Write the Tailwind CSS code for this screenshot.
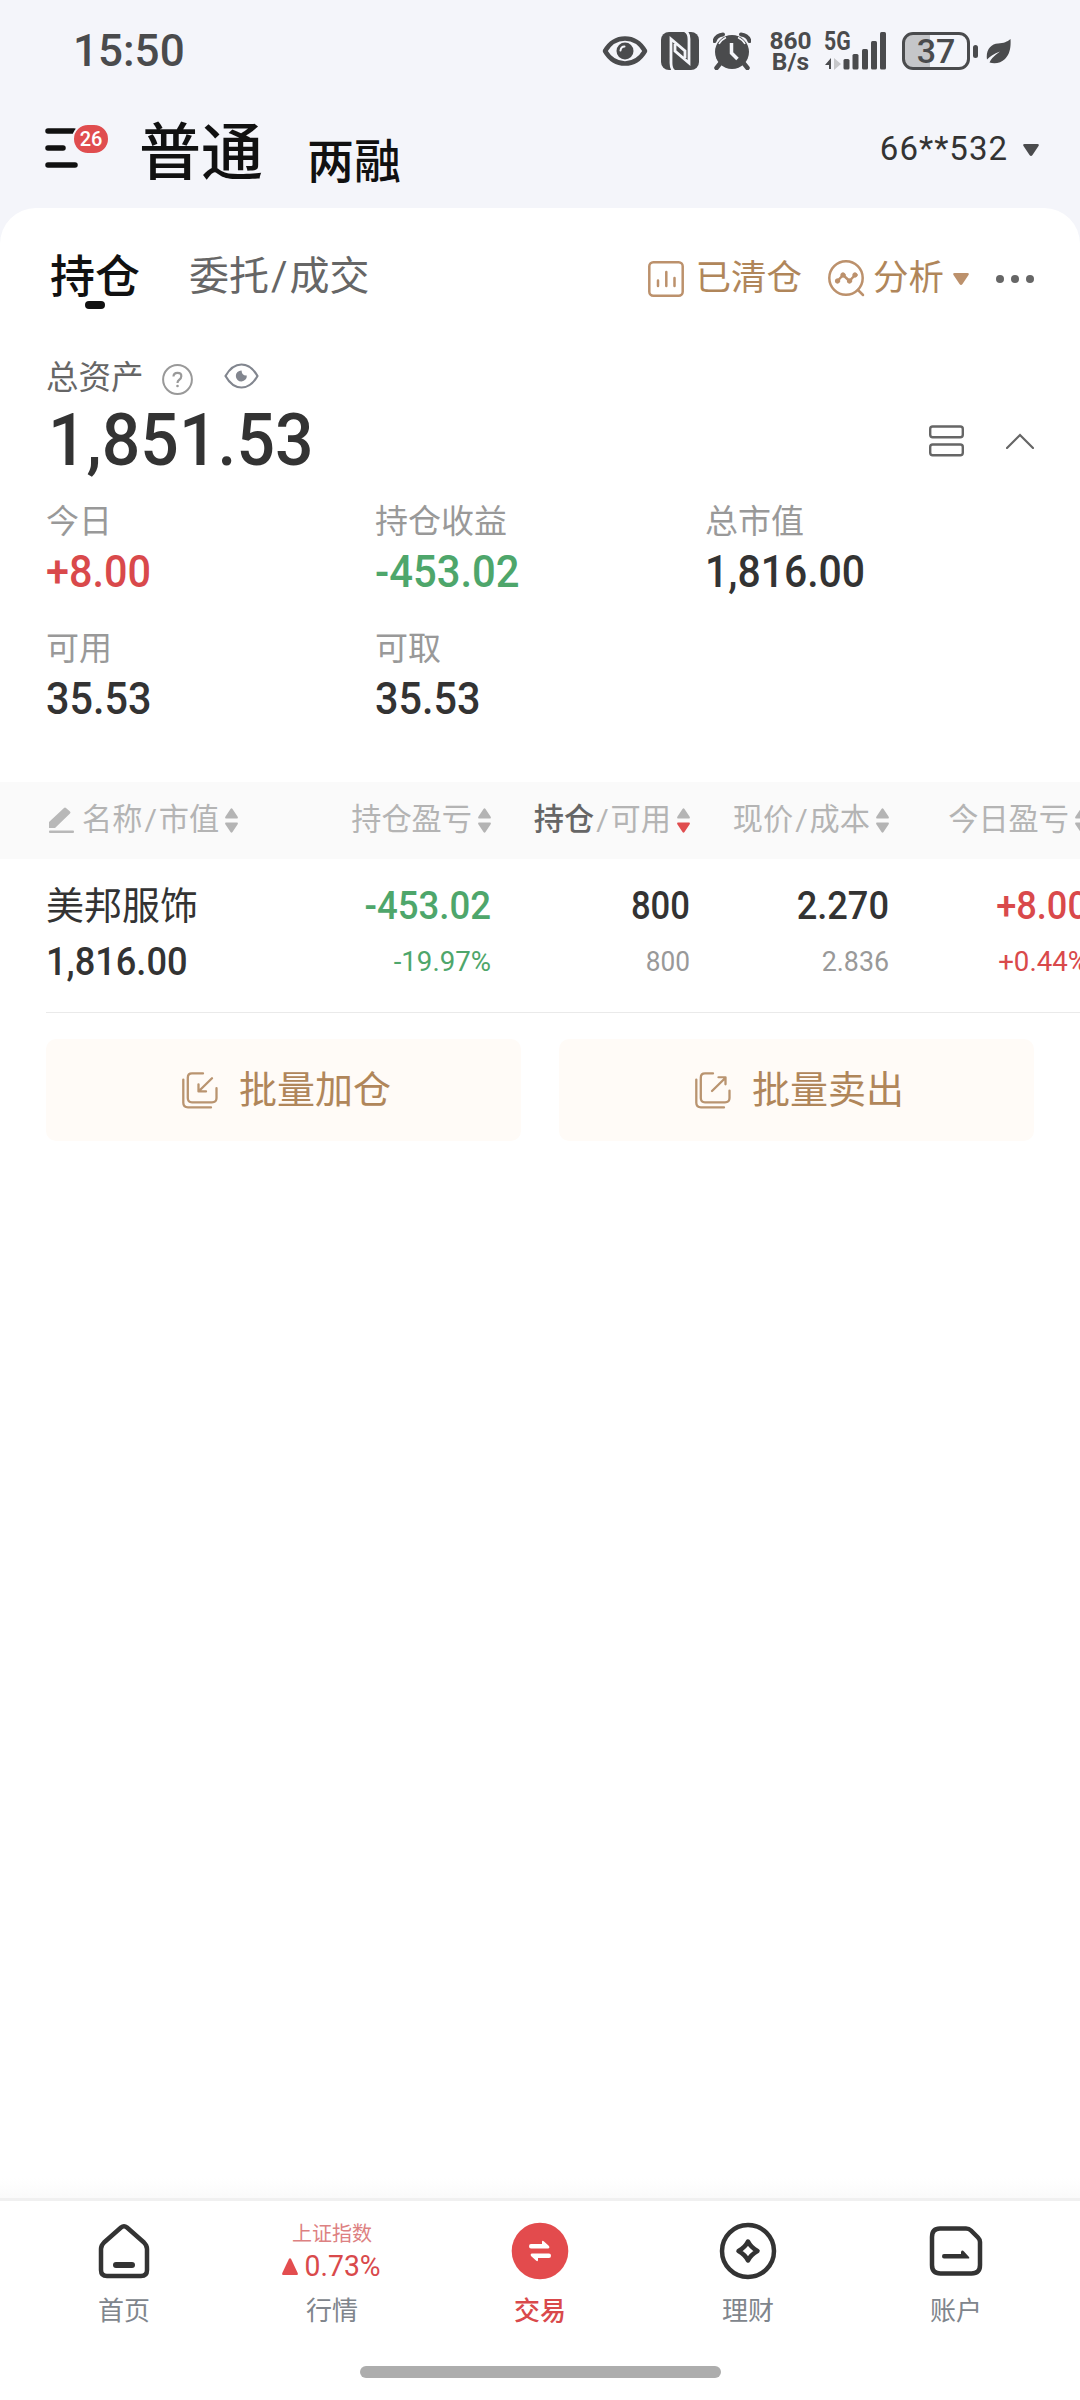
<!DOCTYPE html>
<html lang="zh-CN">
<head>
    <meta charset="UTF-8" />
    <title>持仓</title>
    <script src="https://cdn.jsdelivr.net/npm/@tailwindcss/browser@4"></script>
</head>
<body class="bg-[#f4f5fa] font-['Roboto','Noto_Sans_CJK_SC',sans-serif]">
<div class="w-[1080px] h-[2400px] flex flex-col overflow-hidden leading-none text-[#333]">

    <!-- Status bar -->
    <div class="h-[102px] pl-[73px] pr-[69px] flex items-center justify-between text-[#4a4b4d]">
        <span class="text-[44px] font-medium">15:50</span>
        <div class="flex items-center">
            <svg class="w-[46px] h-[32px] mr-[13px]" viewBox="0 0 46 32" fill="none">
                <path d="M3 16C8 7.500 15 3.500 23 3.500S38 7.500 43 16C38 24.500 31 28.500 23 28.500S8 24.500 3 16Z" stroke="#4a4b4d" stroke-width="4.500" stroke-linejoin="round"/>
                <circle cx="23" cy="16" r="8.500" fill="#4a4b4d"/>
                <path d="M18.500 15.500Q19 11.500 22.500 11.500" stroke="#f4f5fa" stroke-width="2" stroke-linecap="round"/>
            </svg>
            <svg class="w-[38px] h-[38px] mr-[14px]" viewBox="0 0 38 38">
                <rect width="38" height="38" rx="8" fill="#4a4b4d"/>
                <path d="M13 39Q10 37 10 31V7L24 19V26M24 -1Q28 1 28 7V31L14 19V12" fill="none" stroke="#f4f5fa" stroke-width="2.800"/>
            </svg>
            <svg class="w-[38px] h-[38px] mr-[17px]" viewBox="0 0 38 38" fill="none" stroke="#4a4b4d">
                <circle cx="19" cy="20" r="17" fill="#4a4b4d" stroke="none"/>
                <path d="M1.500 9Q3.500 3 10 2.500M36.500 9Q34.500 3 28 2.500" stroke-width="4" stroke-linecap="round"/>
                <path d="M7.500 31L3.500 36M30.500 31L34.500 36" stroke-width="4.500" stroke-linecap="round"/>
                <path d="M6 12Q8 8 13 5.500M32 12Q30 8 25 5.500" stroke="#f4f5fa" stroke-width="1.500"/>
                <path d="M18.500 11V21L24.500 27" stroke="#f4f5fa" stroke-width="3.500"/>
            </svg>
            <div class="w-[45px] mr-[11px] flex flex-col items-center text-[24.500px] leading-[21px] font-bold">
                <span>860</span>
                <span>B/s</span>
            </div>
            <div class="relative w-[63px] h-[38px] mr-[15px]">
                <span class="absolute left-0 -top-[3px] text-[25px] font-bold scale-x-85 origin-left">5G</span>
                <svg class="w-[63px] h-[38px]" viewBox="0 0 63 38" fill="#4a4b4d">
                    <path d="M1 33L7 26V37H5V33Z"/>
                    <path d="M10 26L17 32L10 38Z" fill="#c6c7ca"/>
                    <rect x="19.500" y="27" width="6" height="10.500" rx="1.500"/>
                    <rect x="28.500" y="22" width="6" height="15.500" rx="1.500"/>
                    <rect x="38" y="17" width="6" height="20.500" rx="1.500"/>
                    <rect x="47" y="9" width="6" height="28.500" rx="1.500"/>
                    <rect x="56" y="0" width="6" height="37.500" rx="1.500"/>
                </svg>
            </div>
            <div class="w-[68px] h-[38px] rounded-[11px] border-[3px] border-[#4a4b4d] bg-linear-to-r from-[#c5c6c9] from-40% to-transparent to-40% flex items-center justify-center text-[34px] font-medium">37</div>
            <div class="w-[5px] h-[13px] ml-[3px] mr-[8px] rounded-full bg-[#4a4b4d]"></div>
            <svg class="w-[25px] h-[26px]" viewBox="0 0 25 26">
                <path d="M24.500 1C25 9 24 16 19 21C15 25 9 26 3.500 24.500Q5 20 14 13.500Q5 17 1 21.500C-.500 12 5 6 12 5.500C18 5 21 4 24.500 1Z" fill="#4a4b4d"/>
            </svg>
        </div>
    </div>

    <!-- Account header -->
    <div class="h-[106px] pl-[45px] pr-[41px] flex items-start">
        <div class="relative w-[64px] h-[46px] mt-[23px]">
            <svg class="w-[34px] h-[46px]" viewBox="0 0 34 46" stroke="#111" stroke-width="5.500" stroke-linecap="round">
                <path d="M3 6H29M3 23H18M3 40H30"/>
            </svg>
            <span class="absolute left-[27px] -top-[2px] w-[38px] h-[32px] rounded-full border-2 border-[#f4f5fa] bg-[#e04d4f] text-white text-[20px] font-medium flex items-center justify-center">26</span>
        </div>
        <span class="ml-[30px] mt-[21px] text-[62px] font-medium text-[#111]">普通</span>
        <span class="ml-[44px] mt-[36px] text-[47px] font-medium text-[#111]">两融</span>
        <div class="ml-auto mt-[30px] flex items-center gap-[15px]">
            <span class="text-[33px] tracking-[1px]">66**532</span>
            <svg class="w-[16px] h-[12px] mt-[3px]" viewBox="0 0 16 12"><path d="M1.500 0H14.500Q16.500 0 15.500 2L9.500 11Q8 13 6.500 11L.500 2Q-.500 0 1.500 0Z" fill="#4a4b4d"/></svg>
        </div>
    </div>

    <main class="flex-1 flex flex-col bg-white rounded-t-[36px]">

        <!-- Tabs -->
        <div class="h-[124px] pl-[50px] pr-[46px] pt-[47px] flex items-start">
            <div class="relative text-[45px] font-medium text-[#111]">
                持仓
                <span class="absolute left-[35px] top-[46px] w-[20px] h-[8px] rounded-full bg-[#111]"></span>
            </div>
            <span class="ml-[49px] mt-[2px] text-[40px] text-[#666]">委托<span class="mx-[2px]">/</span>成交</span>
            <div class="ml-auto mt-[5px] flex items-center text-[35.500px] text-[#b0865a]">
                <svg class="w-[36px] h-[36px] mr-[11px]" viewBox="0 0 36 36" fill="none" stroke="#bc916c" stroke-width="2.500" stroke-linecap="round">
                    <rect x="1.300" y="1.300" width="33.400" height="33.400" rx="4"/>
                    <path d="M10 19.500V25M18.300 11V25M26.500 17V25"/>
                </svg>
                <span>已清仓</span>
                <svg class="w-[37px] h-[37px] ml-[26px] mr-[8px]" viewBox="0 0 37 37" fill="none" stroke="#bc916c" stroke-width="2.500" stroke-linecap="round">
                    <circle cx="18" cy="18" r="16.700"/>
                    <path d="M30 30L35 35M9.500 21L15 15L21.500 21L27 15" stroke-linejoin="round"/>
                    <g fill="#bc916c" stroke-width="1"><circle cx="9.500" cy="21" r="2.200"/><circle cx="15" cy="15" r="2.200"/><circle cx="21.500" cy="21" r="2.200"/><circle cx="27" cy="15" r="2.200"/></g>
                </svg>
                <span>分析</span>
                <svg class="w-[16px] h-[12px] ml-[9px] mr-[27px]" viewBox="0 0 16 12"><path d="M1.500 0H14.500Q16.500 0 15.500 2L9.500 11Q8 13 6.500 11L.500 2Q-.500 0 1.500 0Z" fill="#bc916c"/></svg>
                <svg class="w-[38px] h-[8px]" viewBox="0 0 38 8" fill="#666"><circle cx="4" cy="4" r="4"/><circle cx="19" cy="4" r="4"/><circle cx="34" cy="4" r="4"/></svg>
            </div>
        </div>

        <!-- Total assets -->
        <div class="px-[46px]">
            <div class="h-[70px] pt-[30px] flex items-start">
                <span class="text-[32.500px] text-[#666]">总资产</span>
                <svg class="w-[31px] h-[31px] mt-[2px] ml-[18px]" viewBox="0 0 31 31" fill="none" stroke="#999">
                    <circle cx="15.500" cy="15.500" r="14.400" stroke-width="2"/>
                    <path d="M11.500 12.500Q11.500 8.800 15.500 8.800T19.300 12.300Q19.300 14.500 17 16Q15.500 17 15.500 19" stroke-width="2.200"/>
                    <circle cx="15.500" cy="22" r="1.300" fill="#999" stroke="none"/>
                </svg>
                <svg class="w-[35px] h-[26px] mt-[1px] ml-[31px]" viewBox="0 0 35 26" fill="none">
                    <path d="M1.500 13Q8 1.500 17.500 1.500T33.500 13Q27 24.500 17.500 24.500T1.500 13Z" stroke="#82868f" stroke-width="2.200" stroke-linejoin="round"/>
                    <path d="M17.500 7.500A5.500 5.500 0 1 0 22.800 12.500Q18 13 17.500 7.500Z" fill="#82868f"/>
                </svg>
            </div>
            <div class="h-[94px] flex items-start justify-between">
                <span class="mt-[2px] ml-[2px] text-[73px] font-medium scale-x-93 origin-left">1,851.53</span>
                <div class="mt-[23px] flex items-center gap-[42px]">
                    <svg class="w-[35px] h-[32px]" viewBox="0 0 35 32" fill="none" stroke="#666" stroke-width="2.400"><rect x="1.200" y="1.500" width="32.600" height="10.800" rx="2.500"/><rect x="1.200" y="19.500" width="32.600" height="10.800" rx="2.500"/></svg>
                    <svg class="w-[28px] h-[16px]" viewBox="0 0 28 16" fill="none" stroke="#666" stroke-width="2.200" stroke-linecap="round"><path d="M1 15L14 2L27 15"/></svg>
                </div>
            </div>
            <div class="grid grid-cols-[329px_330px_1fr] gap-y-[38px] mt-[9px]">
                <div>
                    <p class="text-[33px] text-[#999]">今日</p>
                    <p class="mt-[12px] text-[44px] font-medium text-[#d9494b] scale-x-94 origin-left">+8.00</p>
                </div>
                <div>
                    <p class="text-[33px] text-[#999]">持仓收益</p>
                    <p class="mt-[12px] text-[44px] font-medium text-[#4ea66b] scale-x-95 origin-left">-453.02</p>
                </div>
                <div>
                    <p class="text-[33px] text-[#999]">总市值</p>
                    <p class="mt-[12px] text-[44px] font-medium scale-x-93 origin-left">1,816.00</p>
                </div>
                <div>
                    <p class="text-[33px] text-[#999]">可用</p>
                    <p class="mt-[12px] text-[44px] font-medium scale-x-94 origin-left">35.53</p>
                </div>
                <div>
                    <p class="text-[33px] text-[#999]">可取</p>
                    <p class="mt-[12px] text-[44px] font-medium scale-x-94 origin-left">35.53</p>
                </div>
            </div>
        </div>

        <!-- Positions table -->
        <div class="mt-[61px] h-[77px] pl-[46px] bg-[#fafafa] grid grid-cols-[246px_199px_199px_199px_199px] items-center text-[30.200px] text-[#b4b4b4]">
            <div class="flex items-center whitespace-nowrap">
                <svg class="w-[25px] h-[26px] ml-[3px] mr-[8px]" viewBox="0 0 25 26" fill="#b8b8b8"><path d="M0 21V15L15 1Q16 0 17 1L21 4.500Q22 5.500 21 6.500L6 21Z"/><rect y="23.500" width="25" height="2.500" rx="1"/></svg>
                <span>名称<span class="mx-[2px]">/</span>市值</span>
                <svg class="w-[13px] h-[25px] ml-[6px]" viewBox="0 0 13 25" fill="#b4b4b4"><path d="M5.500 1Q6.500 -.500 7.500 1L12.500 8.500Q13.500 10.500 12 10.500H1Q-.500 10.500 .500 8.500Z"/><path d="M5.500 24Q6.500 25.500 7.500 24L12.500 16.500Q13.500 14.500 12 14.500H1Q-.500 14.500 .500 16.500Z"/></svg>
            </div>
            <div class="flex items-center justify-end whitespace-nowrap">
                <span>持仓盈亏</span>
                <svg class="w-[13px] h-[25px] ml-[6px]" viewBox="0 0 13 25" fill="#b4b4b4"><path d="M5.500 1Q6.500 -.500 7.500 1L12.500 8.500Q13.500 10.500 12 10.500H1Q-.500 10.500 .500 8.500Z"/><path d="M5.500 24Q6.500 25.500 7.500 24L12.500 16.500Q13.500 14.500 12 14.500H1Q-.500 14.500 .500 16.500Z"/></svg>
            </div>
            <div class="flex items-center justify-end whitespace-nowrap">
                <span><span class="font-medium text-[#666]">持仓</span><span class="mx-[2px]">/</span>可用</span>
                <svg class="w-[13px] h-[25px] ml-[6px]" viewBox="0 0 13 25" fill="#b4b4b4"><path d="M5.500 1Q6.500 -.500 7.500 1L12.500 8.500Q13.500 10.500 12 10.500H1Q-.500 10.500 .500 8.500Z"/><path fill="#e04d4f" d="M5.500 24Q6.500 25.500 7.500 24L12.500 16.500Q13.500 14.500 12 14.500H1Q-.500 14.500 .500 16.500Z"/></svg>
            </div>
            <div class="flex items-center justify-end whitespace-nowrap">
                <span>现价<span class="mx-[2px]">/</span>成本</span>
                <svg class="w-[13px] h-[25px] ml-[6px]" viewBox="0 0 13 25" fill="#b4b4b4"><path d="M5.500 1Q6.500 -.500 7.500 1L12.500 8.500Q13.500 10.500 12 10.500H1Q-.500 10.500 .500 8.500Z"/><path d="M5.500 24Q6.500 25.500 7.500 24L12.500 16.500Q13.500 14.500 12 14.500H1Q-.500 14.500 .500 16.500Z"/></svg>
            </div>
            <div class="flex items-center justify-end whitespace-nowrap">
                <span>今日盈亏</span>
                <svg class="w-[13px] h-[25px] ml-[6px]" viewBox="0 0 13 25" fill="#b4b4b4"><path d="M5.500 1Q6.500 -.500 7.500 1L12.500 8.500Q13.500 10.500 12 10.500H1Q-.500 10.500 .500 8.500Z"/><path d="M5.500 24Q6.500 25.500 7.500 24L12.500 16.500Q13.500 14.500 12 14.500H1Q-.500 14.500 .500 16.500Z"/></svg>
            </div>
        </div>
        <div class="ml-[46px] h-[154px] pt-[28px] border-b border-[#eaeaea] grid grid-cols-[246px_199px_199px_199px_199px] text-[38.500px] font-medium">
            <div>
                <p class="text-[38px] font-normal">美邦服饰</p>
                <p class="mt-[18px] scale-x-94 origin-left">1,816.00</p>
            </div>
            <div class="text-right text-[#4ea66b]">
                <p class="scale-x-95 origin-right">-453.02</p>
                <p class="mt-[22px] text-[28.500px] font-normal scale-x-97 origin-right">-19.97%</p>
            </div>
            <div class="text-right">
                <p class="scale-x-90 origin-right">800</p>
                <p class="mt-[22px] text-[28.500px] font-normal text-[#999] scale-x-92 origin-right">800</p>
            </div>
            <div class="text-right">
                <p class="scale-x-94 origin-right">2.270</p>
                <p class="mt-[22px] text-[28.500px] font-normal text-[#999] scale-x-94 origin-right">2.836</p>
            </div>
            <div class="text-right text-[#d9494b]">
                <p class="scale-x-94 origin-right">+8.00</p>
                <p class="mt-[22px] text-[28.500px] font-normal scale-x-97 origin-right">+0.44%</p>
            </div>
        </div>

        <!-- Batch actions -->
        <div class="mt-[26px] px-[46px] grid grid-cols-2 gap-[38px] text-[38px] text-[#b0865a]">
            <button class="h-[102px] pl-[6px] rounded-[10px] bg-[#fffbf7] flex items-center justify-center gap-[21px]">
                <svg class="w-[36px] h-[37px]" viewBox="0 0 36 39" preserveAspectRatio="none" fill="none" stroke="#b99470" stroke-width="2.300" stroke-linecap="round" stroke-linejoin="round">
                    <path d="M21 1.500H10Q5.800 1.500 5.800 6V27.500Q5.800 32 10 32H30Q34.500 32 34.500 27.500V17M1.300 8V32.500Q1.300 37.300 6 37.300H29"/>
                    <path d="M30 6.500L17 20M16.500 13V20.500H24"/>
                </svg>
                <span>批量加仓</span>
            </button>
            <button class="h-[102px] pl-[6px] rounded-[10px] bg-[#fffbf7] flex items-center justify-center gap-[21px]">
                <svg class="w-[36px] h-[37px]" viewBox="0 0 36 39" preserveAspectRatio="none" fill="none" stroke="#b99470" stroke-width="2.300" stroke-linecap="round" stroke-linejoin="round">
                    <path d="M18 1.500H10Q5.800 1.500 5.800 6V27.500Q5.800 32 10 32H30Q34.500 32 34.500 27.500V19.500M1.300 8V32.500Q1.300 37.300 6 37.300H29"/>
                    <path d="M17 20L30 6.500M23.500 5.500H30.500V13"/>
                </svg>
                <span>批量卖出</span>
            </button>
        </div>

        <!-- Bottom navigation -->
        <div class="mt-auto h-[20px] bg-linear-to-b from-white to-[#fafafa]"></div>
        <nav class="h-[202px] border-t-[3px] border-[#f0f0f0] px-[20px] flex flex-col items-center text-[26px] text-[#80858c]">
            <div class="w-full h-[165px] pt-[21px] grid grid-cols-5">
                <div class="flex flex-col items-center">
                    <svg class="h-[58px] w-[58px]" viewBox="0 0 58 58" fill="none" stroke="#333" stroke-width="4.500" stroke-linejoin="round" stroke-linecap="round">
                        <path d="M26 5.500Q29 3 32 5.500L49 20.500Q52 23.500 52 27V48Q52 54 46 54H12Q6 54 6 48V27Q6 23.500 9 20.500Z"/>
                        <path d="M21 43H37" stroke-width="6"/>
                    </svg>
                    <span class="mt-[18px]">首页</span>
                </div>
                <div class="flex flex-col items-center">
                    <div class="h-[58px] flex flex-col items-center text-[#d9494b]">
                        <span class="mt-[2px] text-[20px] text-[#dd8182]">上证指数</span>
                        <div class="mt-[8px] flex items-center gap-[5px] text-[29.500px]">
                            <svg class="w-[16px] h-[17px]" viewBox="0 0 16 17" fill="#e34d4f"><path d="M7 .800Q8 -.500 9 .800L15.700 15Q16.200 17 15 17H1Q-.200 17 .300 15Z"/></svg>
                            <span class="scale-x-96">0.73%</span>
                        </div>
                    </div>
                    <span class="mt-[18px]">行情</span>
                </div>
                <div class="flex flex-col items-center text-[#d9494b] font-medium">
                    <svg class="h-[58px] w-[58px]" viewBox="0 0 58 58">
                        <circle cx="29" cy="29" r="28.300" fill="#e34b4d"/>
                        <path d="M20 22H31V20Q31 18 33 19.500L38 24Q39 26.500 37 26.500H20Q18 26.500 18 24.300T20 22ZM38 36H27V38Q27 40 25 38.500L20 34Q19 31.500 21 31.500H38Q40 31.500 40 33.700T38 36Z" fill="#fff"/>
                    </svg>
                    <span class="mt-[18px]">交易</span>
                </div>
                <div class="flex flex-col items-center">
                    <svg class="h-[58px] w-[58px]" viewBox="0 0 58 58" fill="none" stroke="#333" stroke-linejoin="round">
                        <circle cx="29" cy="29" r="26" stroke-width="4.500"/>
                        <path d="M29 19.500Q32 25.500 38.500 29Q32 32.500 29 38.500Q26 32.500 19.500 29Q26 25.500 29 19.500Z" stroke-width="4.500"/>
                    </svg>
                    <span class="mt-[18px]">理财</span>
                </div>
                <div class="flex flex-col items-center">
                    <svg class="h-[58px] w-[58px]" viewBox="0 0 58 58" fill="none" stroke="#333" stroke-width="4.500" stroke-linejoin="round">
                        <path d="M13 6.500H39Q42 6.500 44 8.500L51 15.500Q53 17.500 53 20V43Q53 51.500 44.500 51.500H13.500Q5 51.500 5 43V15Q5 6.500 13 6.500Z"/>
                        <path d="M17 32H34V30Q35 27.500 37 29.500L42 35Q43 36.500 41 36.500H17Q15 36.500 15 34.300T17 32Z" fill="#333" stroke="none"/>
                    </svg>
                    <span class="mt-[18px]">账户</span>
                </div>
            </div>
            <div class="w-[361px] h-[12px] rounded-full bg-[#adadad]"></div>
        </nav>
    </main>
</div>
</body>
</html>
